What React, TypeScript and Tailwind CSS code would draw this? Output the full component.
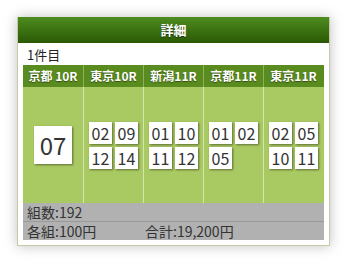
import React from "react";

const font = { fontFamily: '"Noto Sans CJK JP", "Noto Sans", sans-serif' };

const cols: { name: string; nums: string[]; big?: boolean }[] = [
  { name: "京都 10R", nums: ["07"], big: true },
  { name: "東京10R", nums: ["02", "09", "12", "14"] },
  { name: "新潟11R", nums: ["01", "10", "11", "12"] },
  { name: "京都11R", nums: ["01", "02", "05"] },
  { name: "東京11R", nums: ["02", "05", "10", "11"] },
];

export default function App() {
  return (
    <div className="w-[347px] h-[263px] bg-white overflow-hidden pt-[17px] pl-[17px]" style={font}>
      <div className="w-[313px] h-[229px] flex flex-col border-x border-b border-[#c9c9a9] shadow-[0_0_12px_rgba(0,0,0,0.25)] bg-white">
        <div className="h-[26px] flex items-center justify-center bg-gradient-to-b from-[#4d8c1f] to-[#2b5a05] text-white font-bold text-[13px] [text-shadow:0_1px_1px_rgba(0,0,0,0.5)]">
          詳細
        </div>
        <div className="px-[5px] flex flex-col">
          <div className="h-[22px] flex items-center pl-[4px] text-[13px] text-[#222] leading-none">1件目</div>
          <div className="flex h-[22px] bg-[#5a8b1e]">
            {cols.map((c, i) => (
              <div
                key={i}
                className={`w-[60px] flex items-center justify-center text-white font-bold text-[12px] leading-none [text-shadow:0_1px_1px_rgba(0,0,0,0.45)] ${i > 0 ? "border-l border-[#8ab25a]" : ""}`}
              >
                {c.name}
              </div>
            ))}
          </div>
          <div className="flex h-[116px] bg-[#a9c962]">
            {cols.map((c, i) => (
              <div
                key={i}
                className={`w-[60px] flex items-center justify-center ${i > 0 ? "border-l border-[#d4e6b0]" : ""}`}
              >
                {c.big ? (
                  <div className="w-[38px] h-[38px] bg-white flex items-center justify-center text-[24px] text-[#333] leading-none shadow-[1px_1px_2px_rgba(0,0,0,0.45)]">
                    {c.nums[0]}
                  </div>
                ) : (
                  <div className="grid grid-cols-[23px_23px] gap-x-[3px] gap-y-[3px] w-[49px] h-[47px]">
                    {c.nums.map((n, j) => (
                      <div
                        key={j}
                        className="w-[23px] h-[22px] bg-white flex items-center justify-center text-[16px] text-[#333] leading-none shadow-[1px_1px_2px_rgba(0,0,0,0.45)]"
                      >
                        {n}
                      </div>
                    ))}
                  </div>
                )}
              </div>
            ))}
          </div>
          <div className="bg-[#b1b1b1] text-[14px] text-[#333] leading-none">
            <div className="h-[19px] flex items-center pl-[4px] border-b border-[#999]">組数:192</div>
            <div className="h-[18px] flex items-center pl-[4px]">
              <span className="w-[118px]">各組:100円</span>
              <span>合計:19,200円</span>
            </div>
          </div>
        </div>
      </div>
    </div>
  );
}
